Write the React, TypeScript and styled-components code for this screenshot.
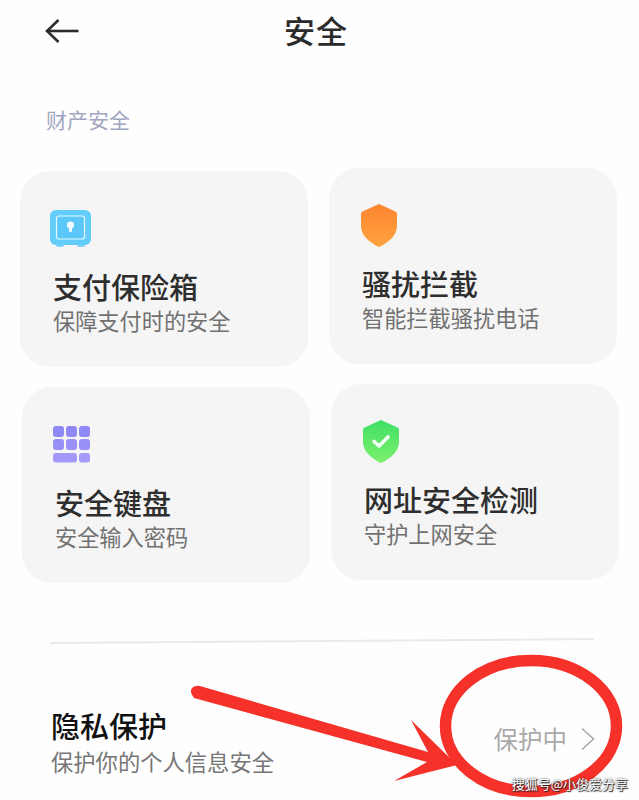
import styled, { createGlobalStyle } from "styled-components";

const GlobalStyle = createGlobalStyle`
  html, body {
    margin: 0;
    padding: 0;
    background: #fefefe;
    font-family: "Noto Sans CJK SC", "Noto Sans", sans-serif;
  }
`;

const Page = styled.div`
  position: relative;
  width: 639px;
  height: 800px;
  overflow: hidden;
  background: #fefefe;
`;

const Header = styled.header`
  display: flex;
  align-items: center;
  gap: 205px;
  height: 62px;
  padding-left: 45px;
`;

const PageTitle = styled.h1`
  margin: -3px 0 0;
  font-size: 31px;
  font-weight: 500;
  line-height: 62px;
  letter-spacing: 1px;
  color: #2b2b2b;
`;

const SectionLabel = styled.div`
  margin-top: 42px;
  padding-left: 46px;
  font-size: 21px;
  line-height: 30px;
  color: #a0a6c0;
`;

const Columns = styled.div`
  display: flex;
  gap: 19px;
  margin-top: 34px;
  padding-left: 20px;
  height: 415px;
`;

const Column = styled.div<{ $top: number }>`
  display: flex;
  flex-direction: column;
  gap: 20px;
  padding-top: ${(p) => p.$top}px;
`;

const Card = styled.div<{ $indent?: number }>`
  box-sizing: border-box;
  width: 288px;
  height: 196px;
  margin-left: ${(p) => p.$indent ?? 0}px;
  padding: 36px 0 0 33px;
  border-radius: 30px;
  background: #f5f5f5;
`;

const IconBox = styled.div<{ $shift?: number }>`
  display: flex;
  align-items: center;
  height: 43px;
  margin-left: ${(p) => p.$shift ?? 0}px;
`;

const CardTitle = styled.div`
  margin-top: 18px;
  font-size: 29px;
  font-weight: 500;
  line-height: 36px;
  color: #2e2e2e;
`;

const CardSub = styled.div`
  margin-top: 3px;
  font-size: 22.2px;
  line-height: 26px;
  color: #717171;
`;

const Divider = styled.div`
  height: 2px;
  margin: 57px 45px 0 50px;
  background: #e9e9e9;
  transform: rotate(-0.4deg);
`;

const PrivacyRow = styled.div`
  display: flex;
  align-items: center;
  justify-content: space-between;
  margin-top: 65px;
  padding: 0 44px 0 51px;
`;

const PrivacyTitle = styled.div`
  font-size: 29px;
  font-weight: 500;
  line-height: 36px;
  color: #111111;
`;

const PrivacySub = styled.div`
  margin-top: 5px;
  font-size: 22.3px;
  line-height: 26px;
  color: #767676;
`;

const Status = styled.div`
  display: flex;
  align-items: center;
  gap: 13px;
  margin-bottom: 4px;
  font-size: 24.5px;
  line-height: 30px;
  color: #a9a9a9;
`;

const Annotation = styled.svg`
  position: absolute;
  left: 0;
  top: 0;
  pointer-events: none;
`;

const Watermark = styled.div`
  position: absolute;
  right: 11px;
  bottom: 7px;
  font-size: 13px;
  line-height: 18px;
  color: #ffffff;
  text-shadow: 0 0 2px #222222, 1px 1px 1px #222222;
`;

function BackArrow() {
  return (
    <svg width="34" height="26" viewBox="0 0 34 26" fill="none" stroke="#2c2c2c" strokeWidth="2.6">
      <path d="M13.5 2 L2 13 L13.5 24" />
      <path d="M2 13 H33.5" />
    </svg>
  );
}

function SafeIcon() {
  return (
    <svg width="41" height="37" viewBox="0 0 41 37">
      <rect x="6" y="32" width="8" height="5" rx="2" fill="#7fd3fb" />
      <rect x="27" y="32" width="8" height="5" rx="2" fill="#7fd3fb" />
      <rect x="0" y="0" width="41" height="35" rx="6" fill="#62cdfb" />
      <rect x="6.5" y="6" width="28" height="23" rx="2.5" fill="#5cc8fa" stroke="#e6f7ff" strokeWidth="1.2" />
      <circle cx="20.5" cy="15" r="3.6" fill="#f2fbff" />
      <rect x="19" y="15" width="3" height="7" rx="1.2" fill="#f2fbff" />
    </svg>
  );
}

function ShieldIcon({ id, from, to, check }: { id: string; from: string; to: string; check?: boolean }) {
  return (
    <svg width="36" height="43" viewBox="0 0 36 43">
      <defs>
        <linearGradient id={id} x1="0.5" y1="0" x2="0.5" y2="1">
          <stop offset="0" stopColor={from} />
          <stop offset="1" stopColor={to} />
        </linearGradient>
      </defs>
      <path
        d="M18 0 L34.5 7.5 Q36 8.2 36 10 V22 C36 31 28 38.5 18 43 C8 38.5 0 31 0 22 V10 Q0 8.2 1.5 7.5 Z"
        fill={`url(#${id})`}
      />
      {check ? (
        <path d="M11 21.5 L16 26 L25 17" fill="none" stroke="#f4fff4" strokeWidth="3.6" strokeLinecap="round" strokeLinejoin="round" />
      ) : null}
    </svg>
  );
}

function KeypadIcon() {
  const keys = [0, 13, 26].flatMap((x) => [0, 13].map((y) => ({ x, y })));
  return (
    <svg width="38" height="37" viewBox="0 0 38 37">
      {keys.map((k) => (
        <rect key={`${k.x}-${k.y}`} x={k.x} y={k.y} width="11" height="11" rx="3" fill={k.y === 0 ? "#8f88f5" : "#9890f7"} />
      ))}
      <rect x="0" y="27" width="24" height="9.5" rx="3" fill="#a499f8" />
      <rect x="26" y="27" width="11" height="9.5" rx="3" fill="#a499f8" />
    </svg>
  );
}

export default function App() {
  return (
    <Page>
      <GlobalStyle />
      <Header>
        <BackArrow />
        <PageTitle>安全</PageTitle>
      </Header>
      <SectionLabel>财产安全</SectionLabel>
      <Columns>
        <Column $top={3}>
          <Card>
            <IconBox $shift={-3}>
              <SafeIcon />
            </IconBox>
            <CardTitle>支付保险箱</CardTitle>
            <CardSub>保障支付时的安全</CardSub>
          </Card>
          <Card $indent={2}>
            <IconBox $shift={-2}>
              <KeypadIcon />
            </IconBox>
            <CardTitle>安全键盘</CardTitle>
            <CardSub>安全输入密码</CardSub>
          </Card>
        </Column>
        <Column $top={0}>
          <Card>
            <IconBox $shift={-1}>
              <ShieldIcon id="orange" from="#fd8430" to="#ffa33f" />
            </IconBox>
            <CardTitle>骚扰拦截</CardTitle>
            <CardSub>智能拦截骚扰电话</CardSub>
          </Card>
          <Card $indent={2}>
            <IconBox $shift={-1}>
              <ShieldIcon id="green" from="#3fdf66" to="#7cf06c" check />
            </IconBox>
            <CardTitle>网址安全检测</CardTitle>
            <CardSub>守护上网安全</CardSub>
          </Card>
        </Column>
      </Columns>
      <Divider />
      <PrivacyRow>
        <div>
          <PrivacyTitle>隐私保护</PrivacyTitle>
          <PrivacySub>保护你的个人信息安全</PrivacySub>
        </div>
        <Status>
          保护中
          <svg width="15" height="24" viewBox="0 0 15 24" fill="none" stroke="#a9a9a9" strokeWidth="1.6">
            <path d="M2 1.5 L13.5 12 L2 22.5" />
          </svg>
        </Status>
      </PrivacyRow>
      <Annotation width="639" height="800" viewBox="0 0 639 800">
        <path
          d="M200 686 L428 752 L411 720 L457 765 L394 781 L427 762 L194 698 Q189 692 192 688 Q195 685 200 686 Z"
          fill="#f5312a"
        />
        <ellipse cx="531" cy="726" rx="85.5" ry="65.5" fill="none" stroke="#f5312a" strokeWidth="11.5" />
      </Annotation>
      <Watermark>搜狐号@小俊爱分享</Watermark>
    </Page>
  );
}
